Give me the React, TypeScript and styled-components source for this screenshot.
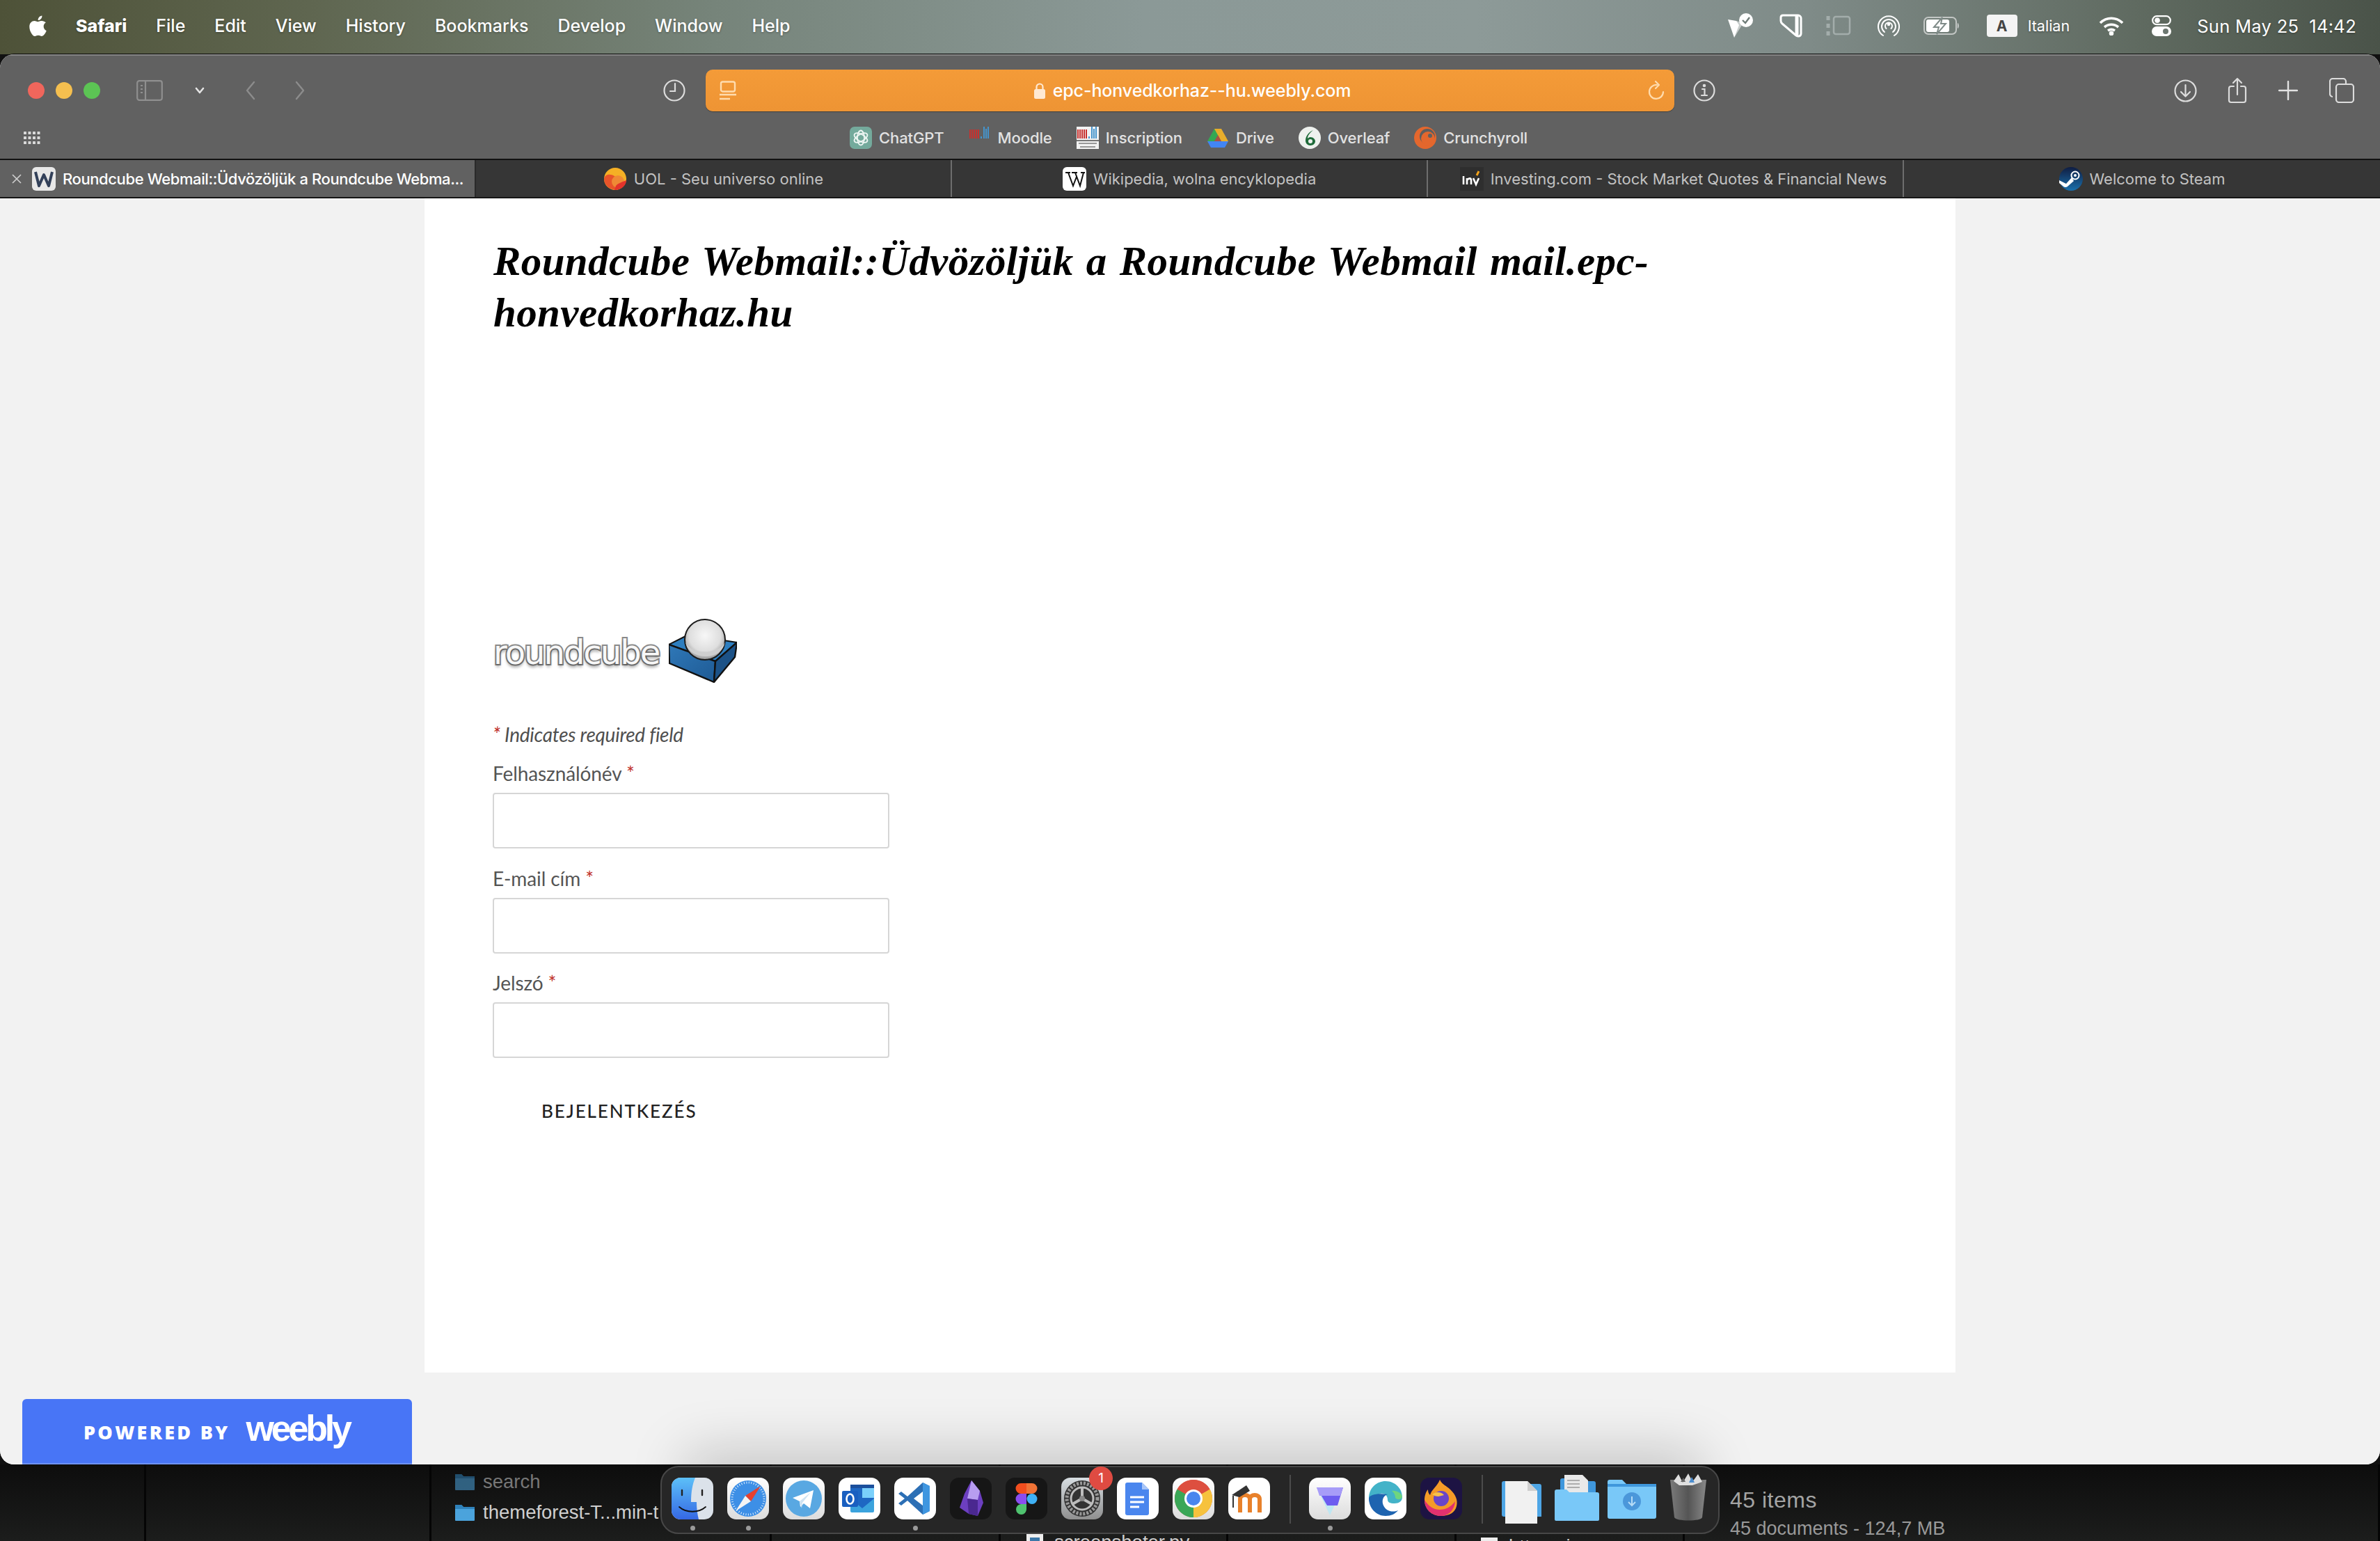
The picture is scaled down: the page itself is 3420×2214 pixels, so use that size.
import React from "react";
import styled, { createGlobalStyle } from "styled-components";

const Global = createGlobalStyle`
  html, body { margin: 0; padding: 0; width: 3420px; height: 2214px; overflow: hidden; background: #111; }
  #root { width: 3420px; height: 2214px; }
  * { box-sizing: border-box; }
`;

const ui = `Inter, "Liberation Sans", sans-serif`;

const Screen = styled.div`
  width: 3420px; height: 2214px; display: flex; flex-direction: column; font-family: ${ui};
`;

/* ---------- menu bar ---------- */
const MenuBar = styled.header`
  height: 78px; flex: none; display: flex; align-items: center; padding: 0 34px 4px 42px;
  background: linear-gradient(90deg, #4e5238 0%, #5f6650 13%, #76847a 30%, #8b9997 48%, #8d9a98 62%, #7f8b88 76%, #5f6a60 90%, #4a5349 100%);
  color: #fff; font-size: 25px; font-weight: 500; text-shadow: 0 1px 3px rgba(0,0,0,.35);
`;
const MenuLeft = styled.nav`display: flex; align-items: center; gap: 42px;`;
const MenuItem = styled.span<{ $bold?: boolean }>`
  font-weight: ${p => (p.$bold ? 800 : 500)}; letter-spacing: 0;
`;
const AppleSlot = styled.span`width: 25px; height: 30px; margin-right: 0; display: flex;`;
const MenuRight = styled.div`margin-left: auto; display: flex; align-items: center;`;
const StatusSlot = styled.span<{ $ml: number; $w: number }>`
  margin-left: ${p => p.$ml}px; width: ${p => p.$w}px; height: 34px; display: flex; align-items: center; justify-content: center;
`;
const InputBadge = styled.span`
  margin-left: 39px; width: 44px; height: 32px; background: #f4f4f4; color: #444; border-radius: 4px;
  font-size: 21px; font-weight: 700; display: flex; align-items: center; justify-content: center; text-shadow: none;
`;
const InputName = styled.span`margin-left: 15px; font-size: 21.5px; font-weight: 400;`;
const Clock = styled.time`margin-left: 37px; font-size: 25.5px; font-weight: 400; letter-spacing: .3px; white-space: pre;`;

/* ---------- window ---------- */
const Window = styled.main`
  height: 2026px; flex: none; display: flex; flex-direction: column; overflow: hidden;
  border-radius: 20px 20px 20px 20px; background: #f2f2f2;
  box-shadow: 0 0 0 1px #0b0b0b;
`;
const Toolbar = styled.div`
  height: 150px; flex: none; background: #616161; border-top: 2px solid #858585; padding-top: 20px;
`;
const ToolRow = styled.div`height: 60px; display: flex; align-items: center; padding-left: 40px;`;
const Lights = styled.div`display: flex; gap: 16px;`;
const Light = styled.span<{ $c: string }>`width: 24px; height: 24px; border-radius: 50%; background: ${p => p.$c};`;
const ToolIcon = styled.span<{ $ml: number; $w: number }>`
  margin-left: ${p => p.$ml}px; width: ${p => p.$w}px; height: 40px; flex: none; display: flex; align-items: center; justify-content: center;
`;
const UrlBar = styled.div`
  margin-left: 29px; width: 1392px; height: 60px; flex: none; border-radius: 10px; position: relative;
  background: linear-gradient(180deg, #f49b38, #ee9434); box-shadow: 0 1px 1px rgba(0,0,0,.35);
  display: flex; align-items: center; justify-content: space-between; padding: 0 14px 0 20px; color: #fff;
`;
const UrlCenter = styled.span`display: flex; align-items: center; gap: 10px; font-size: 25px; font-weight: 500; letter-spacing: -.1px; margin-left: 0;`;
const BookRow = styled.div`height: 40px; margin-top: 18px; display: flex; align-items: center; padding-left: 34px;`;
const BookList = styled.div`margin-left: 1163px; display: flex; align-items: center; gap: 35px;`;
const Book = styled.span`display: flex; align-items: center; gap: 10px; color: #e2e2e2; font-size: 22px; font-weight: 500; letter-spacing: -.1px;`;
const Fav = styled.span`width: 32px; height: 32px; flex: none; display: flex;`;

const Tabs = styled.div`
  height: 57px; flex: none; display: grid; grid-template-columns: repeat(5, 1fr);
  background: #363636; border-top: 2px solid #111; border-bottom: 2px solid #161616;
`;
const Tab = styled.div<{ $active?: boolean; $pl?: number }>`
  display: flex; align-items: center; gap: 10px; overflow: hidden; white-space: nowrap;
  justify-content: ${p => (p.$active ? "flex-start" : "center")};
  padding-left: ${p => (p.$active ? 16 : p.$pl ?? 0)}px;
  background: ${p => (p.$active ? "#616161" : "transparent")};
  color: ${p => (p.$active ? "#fff" : "#c2c2c2")};
  font-size: 22px; font-weight: ${p => (p.$active ? 500 : 400)};
  letter-spacing: ${p => (p.$active ? "-.4px" : "0")};
  border-right: 2px solid ${p => (p.$active ? "#2a2a2a" : "#6e6e6e")};
  &:last-child { border-right: 0; }
`;
const TabClose = styled.span`width: 16px; height: 16px; display: flex; margin-right: 4px;`;
const TabFav = styled.span`width: 34px; height: 34px; flex: none; display: flex;`;

/* ---------- page ---------- */
const Page = styled.div`
  flex: 1; position: relative; overflow: hidden; background: #f2f2f2; display: flex; justify-content: center; padding-right: 0;
  border-radius: 0 0 20px 20px;
`;
const Column = styled.section`
  width: 2200px; height: 1687px; background: #fff; padding: 53px 99px 0; margin-right: 0; flex: none;
`;
const Title = styled.h1`
  margin: 0; width: 1760px; font-family: "Liberation Serif", serif; font-style: italic; font-weight: 700;
  font-size: 59px; line-height: 74px; color: #000; letter-spacing: .4px; word-spacing: 3px;
  overflow-wrap: normal;
`;
const Logo = styled.div`margin-top: 403px; height: 92px; display: flex; align-items: flex-end; gap: 14px;`;
const LogoWord = styled.span`
  font-family: "DejaVu Sans", sans-serif; font-size: 48px; line-height: 62px; letter-spacing: -2px; margin-bottom: 13px; color: #f8f8f8;
  -webkit-text-stroke: 4px #8a8a8a; paint-order: stroke fill; text-shadow: 0 4px 4px rgba(0,0,0,.4); font-weight: 400;
`;
const Required = styled.p`
  margin: 56px 0 0 -1px; font: italic 400 28px/36px Lato, sans-serif; color: #4f4f4f; letter-spacing: -.25px;
`;
const Star = styled.span`color: #c0322b;`;
const Field = styled.div`margin-top: 20px; display: flex; flex-direction: column; gap: 10px; & + & { margin-top: 24.5px; }`;
const FieldLabel = styled.label`font: 400 28px/36px Lato, sans-serif; color: #555; letter-spacing: -.1px; margin-left: -1px;`;
const TextInput = styled.input`
  width: 570px; height: 80px; margin-left: -1px; border: 2px solid #d6d6d6; border-radius: 4px; background: #fff; outline: 0; display: block;
`;
const Submit = styled.button`
  display: block; margin: 58px 0 0 69px; padding: 0; border: 0; background: none; color: #222;
  font: 500 26px/36px Lato, sans-serif; letter-spacing: 1.9px;
`;
const Badge = styled.a`
  position: absolute; left: 32px; bottom: 0; width: 560px; height: 94px; background: #4875f6; border-radius: 6px 6px 0 0;
  border-bottom: 2px solid #6f93fb; color: #fff; display: flex; align-items: center; padding-left: 88px; gap: 23px;
`;
const BadgeSmall = styled.span`font: 800 27px/1 "Open Sans", sans-serif; letter-spacing: 3.3px; white-space: nowrap; margin-top: 2px;`;
const BadgeBrand = styled.span`font: 700 52px/1 "Liberation Sans", sans-serif; letter-spacing: -4.2px; margin-top: -8px;`;
const DockShadow = styled.div`
  position: absolute; left: 1000px; bottom: -40px; width: 1430px; height: 40px; box-shadow: 0 0 80px 14px rgba(0,0,0,.22);
`;

/* ---------- desktop behind ---------- */
const Desktop = styled.footer`
  flex: 1; position: relative; overflow: hidden; display: grid;
  grid-template-columns: 210px 410px 489px 329px 327px 328px 328px 1fr;
  background: linear-gradient(180deg, #0d0d0d 0%, #1c1d1c 100%);
  color: #ccc; font-family: "Liberation Sans", sans-serif;
`;
const FinderCol = styled.div<{ $pl?: number; $pt?: number }>`
  border-right: 3px solid #050505; padding-left: ${p => p.$pl ?? 0}px; padding-top: ${p => p.$pt ?? 0}px;
  display: flex; flex-direction: column; &:last-child { border-right: 0; }
`;
const FinderRow = styled.div<{ $dim?: boolean }>`
  height: 44px; display: flex; align-items: center; gap: 12px; font-size: 27.5px; white-space: nowrap;
  color: ${p => (p.$dim ? "#777" : "#cfcfcf")};
`;
const FinderIcon = styled.span<{ $dim?: boolean }>`width: 28px; height: 26px; flex: none; display: flex; opacity: ${p => (p.$dim ? 0.55 : 1)};`;
const StatusBig = styled.div`font-size: 32px; line-height: 36px; color: #a4a4a4; margin-top: 33px; white-space: nowrap; letter-spacing: .5px;`;
const StatusSmall = styled.div`font-size: 27px; line-height: 30px; color: #999; margin-top: 8px; white-space: nowrap;`;

const Dock = styled.div`
  position: absolute; left: 949px; top: 2px; width: 1522px; height: 98px; border-radius: 26px;
  background: #262626; border: 2px solid #474747; padding: 15px 0 0 14px; display: flex; align-items: flex-start;
`;
const Tile = styled.div<{ $ml?: number; $w?: number }>`
  position: relative; flex: none; width: ${p => p.$w ?? 60}px; height: 60px; margin-left: ${p => p.$ml ?? 20}px;
  & > svg { display: block; overflow: visible; }
  &:first-child { margin-left: 0; }
`;
const Running = styled.i`
  position: absolute; left: 50%; top: 69px; width: 7px; height: 7px; margin-left: -3.5px; border-radius: 50%; background: #9a9a9a;
`;
const Notif = styled.b`
  position: absolute; right: -14px; top: -16px; width: 34px; height: 34px; border-radius: 50%; background: #df4b42; color: #fff;
  font: 400 19px/34px Inter, sans-serif; text-align: center;
`;
const DockSep = styled.span`flex: none; width: 2px; height: 70px; margin: -4px 0 0 28px; background: #4b4b4b;`;

/* ---------- icons ---------- */
const Apple = () => (
  <svg width="25" height="30" viewBox="0 0 814 1000" fill="#fff">
    <path d="M788 341c-6 4-108 62-108 190 0 148 130 200 134 202-1 3-21 72-69 142-43 62-88 123-156 123s-86-40-165-40c-77 0-104 41-166 41s-106-57-156-128C44 788 0 667 0 552c0-184 120-282 238-282 63 0 115 41 155 41 38 0 97-44 168-44 27 0 125 3 227 74zM554 169c29-35 50-83 50-131 0-7-1-14-2-19-48 2-105 32-139 72-27 31-52 79-52 128 0 7 1 15 2 17 3 1 8 1 13 1 43 0 97-29 128-68z" />
  </svg>
);
const Shield = () => (
  <svg width="38" height="36" viewBox="0 0 38 36" fill="#fff">
    <path d="M1 9l12 2 4 6-7 18z" /><path d="M13 11l10 3-13 21z" opacity=".55" />
    <circle cx="27" cy="10" r="10" /><path d="M22 10l4 4 6-8" stroke="#6f7c78" strokeWidth="2.4" fill="none" />
  </svg>
);
const Tag = () => (
  <svg width="34" height="34" viewBox="0 0 34 34" fill="none" stroke="#fff" strokeWidth="3" strokeLinecap="round" strokeLinejoin="round">
    <path d="M3 5c0-2 1-3 3-3h22c2 0 4 2 4 4v22c0 4-4 5-7 3L5 14c-1-1-2-2-2-4z" />
    <path d="M26 4v25" strokeWidth="5" />
  </svg>
);
const DimFrame = () => (
  <svg width="36" height="32" viewBox="0 0 36 32" fill="none" stroke="#a3adab" strokeWidth="2.5">
    <rect x="11" y="3" width="23" height="25" rx="3" /><path d="M3 2v6M3 13v6M3 24v6" strokeWidth="5" />
  </svg>
);
const Airdrop = () => (
  <svg width="32" height="32" viewBox="0 0 32 32" fill="none" stroke="#fff" strokeWidth="2" strokeLinecap="round">
    <path d="M8 30A15 15 0 1 1 24 30" /><path d="M10 25A10 10 0 1 1 22 25" /><path d="M12.5 20a5 5 0 1 1 7 0" /><circle cx="16" cy="14" r="1.2" fill="#fff" />
  </svg>
);
const Battery = () => (
  <svg width="52" height="26" viewBox="0 0 52 26">
    <rect x="1" y="1" width="46" height="24" rx="6" fill="none" stroke="#e6e6e6" strokeWidth="2" opacity=".7" />
    <rect x="4" y="4" width="33" height="18" rx="3" fill="#fff" />
    <path d="M49 9c2 1 2 7 0 8z" fill="#e6e6e6" />
    <path d="M27 1L15 15h7l-3 10 13-15h-7z" fill="#fff" stroke="#7f8b88" strokeWidth="2" />
  </svg>
);
const Wifi = () => (
  <svg width="36" height="28" viewBox="0 0 36 28" fill="none" stroke="#fff" strokeWidth="3.6" strokeLinecap="butt">
    <path d="M2 10c9-9 23-9 32 0" /><path d="M8 16c6-5 14-5 20 0" /><path d="M13 21c3-2 7-2 10 0" /><circle cx="18" cy="25" r="1.5" fill="#fff" />
  </svg>
);
const Control = () => (
  <svg width="28" height="30" viewBox="0 0 28 30">
    <rect x="1.2" y="1.2" width="25.6" height="12" rx="6" fill="none" stroke="#fff" strokeWidth="2.2" />
    <circle cx="8" cy="7.2" r="3.8" fill="#fff" />
    <rect y="16" width="28" height="14" rx="7" fill="#fff" /><circle cx="20" cy="23" r="4" fill="#6c7770" />
  </svg>
);

const Sidebar = () => (
  <svg width="38" height="30" viewBox="0 0 38 30" fill="none" stroke="#8f8f8f" strokeWidth="2.2">
    <rect x="1.2" y="1.2" width="35.6" height="27.6" rx="3" /><path d="M13 1v28" />
    <path d="M6 8h3M6 13h3M6 18h3" strokeWidth="2" />
  </svg>
);
const Chevron = () => (
  <svg width="14" height="10" viewBox="0 0 14 10" fill="none" stroke="#e3e3e3" strokeWidth="2.6" strokeLinecap="round" strokeLinejoin="round"><path d="M2 2l5 6 5-6" /></svg>
);
const Back = ({ flip }: { flip?: boolean }) => (
  <svg width="14" height="28" viewBox="0 0 14 28" fill="none" stroke="#8c8c8c" strokeWidth="2.4" strokeLinecap="round" strokeLinejoin="round">
    <path d={flip ? "M2 2l10 12L2 26" : "M12 2L2 14l10 12"} />
  </svg>
);
const History = () => (
  <svg width="32" height="32" viewBox="0 0 32 32" fill="none" stroke="#dcdcdc" strokeWidth="2.2" strokeLinecap="round">
    <circle cx="16" cy="16" r="14.5" /><path d="M17 6v11h-7" />
  </svg>
);
const Reader = () => (
  <svg width="24" height="28" viewBox="0 0 24 28" fill="none" stroke="#ffdcae" strokeWidth="2.4">
    <rect x="2" y="1.5" width="20" height="14" rx="2.5" /><path d="M0 20h24M0 26h15" />
  </svg>
);
const Lock = () => (
  <svg width="18" height="24" viewBox="0 0 18 24">
    <path d="M4.5 11V7a4.5 4.5 0 0 1 9 0v4" fill="none" stroke="#ffe9d2" strokeWidth="2.2" /><rect x="1" y="10" width="16" height="14" rx="2.5" fill="#ffe9d2" />
  </svg>
);
const Reload = () => (
  <svg width="24" height="30" viewBox="0 0 24 30" fill="none" stroke="#ffdcae" strokeWidth="2.2" strokeLinecap="round" strokeLinejoin="round">
    <path d="M13 7a10 10 0 1 0 9 10" /><path d="M11 2l5 5-5 5" />
  </svg>
);
const Info = () => (
  <svg width="32" height="32" viewBox="0 0 32 32" fill="none" stroke="#dcdcdc" strokeWidth="2.2" strokeLinecap="round">
    <circle cx="16" cy="16" r="14.5" /><path d="M13 14h3.5v9M12 23h8" /><circle cx="16" cy="9" r="1.2" fill="#dcdcdc" />
  </svg>
);
const Download = () => (
  <svg width="33" height="33" viewBox="0 0 33 33" fill="none" stroke="#dcdcdc" strokeWidth="2.2" strokeLinecap="round" strokeLinejoin="round">
    <circle cx="16.5" cy="16.5" r="15" /><path d="M16.5 8v16M10 18l6.5 6.5L23 18" />
  </svg>
);
const Share = () => (
  <svg width="28" height="38" viewBox="0 0 28 38" fill="none" stroke="#dcdcdc" strokeWidth="2.2" strokeLinecap="round" strokeLinejoin="round">
    <path d="M9 13H5a3 3 0 0 0-3 3v17a3 3 0 0 0 3 3h18a3 3 0 0 0 3-3V16a3 3 0 0 0-3-3h-4" /><path d="M14 25V2M8 8l6-6 6 6" />
  </svg>
);
const Plus = () => (
  <svg width="28" height="28" viewBox="0 0 28 28" stroke="#e2e2e2" strokeWidth="2.4" strokeLinecap="round"><path d="M14 1v26M1 14h26" /></svg>
);
const TabsIcon = () => (
  <svg width="36" height="36" viewBox="0 0 36 36" fill="none" stroke="#dcdcdc" strokeWidth="2.2">
    <rect x="10" y="9" width="25" height="26" rx="4" /><path d="M5 27a4 4 0 0 1-4-4V5a4 4 0 0 1 4-4h15a4 4 0 0 1 4 4v4" />
  </svg>
);
const Grid = () => (
  <svg width="24" height="18" viewBox="0 0 24 18" fill="#d9d9d9">
    {[0, 7, 14].flatMap(y => [0, 6.5, 13, 19.5].map(x => <rect key={`${x}-${y}`} x={x} y={y} width="4" height="4" rx=".6" />))}
  </svg>
);
const Close = () => (
  <svg width="16" height="16" viewBox="0 0 16 16" stroke="#cfcfcf" strokeWidth="1.6"><path d="M2 2l12 12M14 2L2 14" /></svg>
);

const ChatGPT = () => (
  <svg width="32" height="32" viewBox="0 0 32 32">
    <rect width="32" height="32" rx="7" fill="#74aa9c" />
    <g fill="none" stroke="#eef6f3" strokeWidth="1.8">
      <ellipse cx="16" cy="16" rx="5" ry="10.5" /><ellipse cx="16" cy="16" rx="5" ry="10.5" transform="rotate(60 16 16)" /><ellipse cx="16" cy="16" rx="5" ry="10.5" transform="rotate(120 16 16)" />
    </g>
  </svg>
);
const UniBars = () => (
  <g>
    {[1, 4, 7, 10, 13].map(x => <rect key={x} x={x} y="4" width="2" height="13" fill="#c7312e" />)}
    <rect x="17" y="14" width="2" height="3" fill="#4594cc" />
    {[21, 24, 27].map((x, i) => <rect key={x} x={x} y={i === 1 ? 3 : 0} width="2" height={i === 1 ? 14 : 17} fill="#4594cc" />)}
  </g>
);
const Moodle = () => (
  <svg width="32" height="32" viewBox="0 0 32 32"><UniBars /></svg>
);
const Inscription = () => (
  <svg width="32" height="32" viewBox="0 0 32 32">
    <rect width="32" height="32" fill="#f2f2f2" /><UniBars />
    <rect x="0" y="19" width="32" height="2" fill="#777" /><rect x="3" y="23" width="26" height="2" fill="#999" /><rect x="5" y="28" width="22" height="2" fill="#999" />
  </svg>
);
const Drive = () => (
  <svg width="32" height="32" viewBox="0 0 32 32">
    <path d="M11 3h10l-5 10-5 8H1z" fill="#34a853" /><path d="M11 3h10l10 18H21z" fill="#e8ad2b" /><path d="M1 21h30l-5 9H6z" fill="#4285f4" /><path d="M11 21h10l-5-9z" fill="#c84a3b" opacity=".7" />
  </svg>
);
const Overleaf = () => (
  <svg width="32" height="32" viewBox="0 0 32 32">
    <circle cx="16" cy="16" r="16" fill="#eef1ee" />
    <path d="M21 5c-7 3-11 9-11 15 0 4 3 7 7 7s7-3 7-6-3-6-7-6c-2 0-3 1-4 2 0-4 3-8 8-12z" fill="#1f6b3a" />
    <circle cx="17" cy="21" r="3" fill="#eef1ee" />
  </svg>
);
const Crunchy = () => (
  <svg width="32" height="32" viewBox="0 0 32 32">
    <circle cx="16" cy="16" r="16" fill="#e4672d" />
    <circle cx="19" cy="14" r="11" fill="#5e5e5e" /><circle cx="20" cy="17" r="10" fill="#e4672d" /><circle cx="23" cy="13" r="3" fill="#616161" />
  </svg>
);
const WeeblyFav = () => (
  <svg width="34" height="34" viewBox="0 0 34 34">
    <rect width="34" height="34" rx="6" fill="#e8e8e8" />
    <path d="M5 7l5 20 7-16 7 16 5-20" fill="none" stroke="#33415a" strokeWidth="4" strokeLinejoin="round" />
  </svg>
);
const Uol = () => (
  <svg width="34" height="34" viewBox="0 0 34 34">
    <circle cx="17" cy="17" r="16" fill="#f5b025" /><path d="M1 17a16 16 0 0 0 26 12L16 13C10 9 2 10 1 17z" fill="#e8542a" /><circle cx="21" cy="21" r="9" fill="#ef8a35" />
    <path d="M16 33c10 0 17-7 17-14-4 2-12 4-15 8z" fill="#e3332b" />
  </svg>
);
const Wiki = () => (
  <svg width="34" height="34" viewBox="0 0 34 34">
    <rect width="34" height="34" rx="6" fill="#fff" />
    <path d="M4 8h7M8 8l7 19 5-13M13 8h8M18 8l7 19 5-19M26 8h6" fill="none" stroke="#111" strokeWidth="2" />
  </svg>
);
const Inv = () => (
  <svg width="34" height="34" viewBox="0 0 34 34">
    <rect width="34" height="34" fill="#2e2e2e" />
    <path d="M5 13v12M10 25V16M10 19c3-4 6-3 6 0v6M19 16l4 9 4-9" fill="none" stroke="#fff" strokeWidth="2.6" />
    <path d="M27 6l-3 6" stroke="#f2a31b" strokeWidth="3" />
  </svg>
);
const Steam = () => (
  <svg width="34" height="34" viewBox="0 0 34 34">
    <defs><linearGradient id="st" x1="0" y1="0" x2="0" y2="1"><stop offset="0" stopColor="#101d42" /><stop offset="1" stopColor="#1a70ac" /></linearGradient></defs>
    <circle cx="17" cy="17" r="17" fill="url(#st)" />
    <circle cx="23" cy="12" r="5.5" fill="none" stroke="#fff" strokeWidth="2" /><circle cx="23" cy="12" r="2" fill="#fff" />
    <path d="M0 19l10 5 8-9 3 5-8 7a5 5 0 0 1-8 0L0 23z" fill="#fff" />
  </svg>
);

const RoundcubeBox = () => (
  <svg width="98" height="92" viewBox="0 0 98 92">
    <defs>
      <radialGradient id="ball" cx=".5" cy=".4" r=".65"><stop offset="0" stopColor="#f7f7f7" /><stop offset=".6" stopColor="#dedede" /><stop offset=".85" stopColor="#a9a9a9" /><stop offset="1" stopColor="#666" /></radialGradient>
      <linearGradient id="lf" x1="0" y1="0" x2="1" y2="1"><stop offset="0" stopColor="#2f78b8" /><stop offset="1" stopColor="#1e5a94" /></linearGradient>
    </defs>
    <path d="M0 37l28-14 70 11-31 27z" fill="#2d7ebf" stroke="#111" strokeWidth="2" strokeLinejoin="round" />
    <path d="M0 37l67 24-2 30L1 64z" fill="url(#lf)" stroke="#111" strokeWidth="2.4" strokeLinejoin="round" />
    <path d="M67 61l31-27-3 21-30 36z" fill="#1c5287" stroke="#111" strokeWidth="2.4" strokeLinejoin="round" />
    <circle cx="52" cy="30" r="29" fill="url(#ball)" stroke="#1b1b1b" strokeWidth="2" />
    <path d="M24 34c8 18 48 18 57 0-4 14-14 20-28 20s-25-6-29-20z" fill="#cfcfcf" />
  </svg>
);

const Finder = () => (
  <svg width="60" height="60" viewBox="0 0 60 60">
    <defs><linearGradient id="fi" x1="0" y1="0" x2="0" y2="1"><stop offset="0" stopColor="#5cc0f8" /><stop offset="1" stopColor="#3568e4" /></linearGradient></defs>
    <rect width="60" height="60" rx="13" fill="#dbe2ea" />
    <path d="M13 0h21c-4 10-6 20-6 35h8c0 9 1 17 3 25H13A13 13 0 0 1 0 47V13A13 13 0 0 1 13 0z" fill="url(#fi)" />
    <path d="M15 18v7M44 18v7" stroke="#222" strokeWidth="2.4" strokeLinecap="round" />
    <path d="M11 42c10 9 28 9 38 0" stroke="#111" strokeWidth="1.8" fill="none" strokeLinecap="round" />
  </svg>
);
const Safari = () => (
  <svg width="60" height="60" viewBox="0 0 60 60">
    <defs><linearGradient id="wt" x1="0" y1="0" x2="0" y2="1"><stop offset="0" stopColor="#fff" /><stop offset="1" stopColor="#dcdcdc" /></linearGradient></defs>
    <rect width="60" height="60" rx="13" fill="url(#wt)" />
    <circle cx="30" cy="30" r="26" fill="#3d8fe6" />
    <circle cx="30" cy="30" r="23" fill="none" stroke="#dfeefc" strokeWidth="3" strokeDasharray="1 2.5" />
    <path d="M48 12L26 26l8 8z" fill="#e5402f" /><path d="M12 48l22-14-8-8z" fill="#f4f4f4" />
  </svg>
);
const Telegram = () => (
  <svg width="60" height="60" viewBox="0 0 60 60">
    <rect width="60" height="60" rx="13" fill="url(#wt)" /><circle cx="30" cy="30" r="26" fill="#59a8e2" />
    <path d="M14 29l30-11-5 26-9-7-5 5-1-8z" fill="#fff" /><path d="M24 34l16-13-12 15-1 8z" fill="#cfe3f2" />
  </svg>
);
const Outlook = () => (
  <svg width="60" height="60" viewBox="0 0 60 60">
    <rect width="60" height="60" rx="13" fill="#fff" />
    <rect x="17" y="10" width="34" height="34" rx="2" fill="#1e67c3" /><rect x="34" y="15" width="17" height="14" fill="#7ad0fb" /><rect x="17" y="10" width="34" height="5" fill="#1b4f9c" />
    <path d="M17 30l17 14 17-14v18a2 2 0 0 1-2 2H19a2 2 0 0 1-2-2z" fill="#3ba3dd" />
    <rect x="5" y="19" width="23" height="23" rx="2" fill="#1a5fc0" /><ellipse cx="16.5" cy="30.5" rx="5" ry="7" fill="none" stroke="#fff" strokeWidth="2.6" />
  </svg>
);
const VSCode = () => (
  <svg width="60" height="60" viewBox="0 0 60 60">
    <rect width="60" height="60" rx="13" fill="#fff" />
    <path d="M41 7l10 5v36l-10 5L19 33l-9 7-4-3 9-7-9-7 4-3 9 7z" fill="#2c6fb5" /><path d="M41 7l10 5v36l-10 5z" fill="#3f96e0" /><path d="M41 20L28 30l13 10z" fill="#fff" />
  </svg>
);
const Obsidian = () => (
  <svg width="60" height="60" viewBox="0 0 60 60">
    <rect width="60" height="60" rx="13" fill="#161616" />
    <path d="M31 4l12 15 5 17-8 19-13-3-13-9 7-20z" fill="#6c3fc0" /><path d="M31 4l12 15-3 13-15-2z" fill="#b79df0" /><path d="M25 30l15 2 0 23-13-3z" fill="#4a2890" />
  </svg>
);
const Figma = () => (
  <svg width="60" height="60" viewBox="0 0 60 60">
    <rect width="60" height="60" rx="13" fill="#161616" />
    <path d="M30 8H22a7.500 7.500 0 0 0 0 15h8z" fill="#f24e1e" /><path d="M30 8h8a7.500 7.500 0 0 1 0 15h-8z" fill="#f07336" />
    <path d="M30 23H22a7.500 7.500 0 0 0 0 15h8z" fill="#8a4df0" /><circle cx="38" cy="30.500" r="7.500" fill="#3fb1f5" />
    <path d="M22 38h8v7.500a7.500 7.500 0 1 1-8-7.500z" fill="#4fc26f" />
  </svg>
);
const Settings = () => (
  <svg width="60" height="60" viewBox="0 0 60 60">
    <defs><linearGradient id="gs" x1="0" y1="0" x2="0" y2="1"><stop offset="0" stopColor="#d7dee2" /><stop offset="1" stopColor="#8f8f8f" /></linearGradient></defs>
    <rect width="60" height="60" rx="13" fill="url(#gs)" /><circle cx="30" cy="30" r="26" fill="#333" />
    <circle cx="30" cy="30" r="22" fill="none" stroke="#999" strokeWidth="5" strokeDasharray="3 2" /><circle cx="30" cy="30" r="16" fill="none" stroke="#bdbdbd" strokeWidth="3" />
    <path d="M30 30V14M30 30L16 38M30 30l14 8" stroke="#bdbdbd" strokeWidth="4" /><circle cx="30" cy="30" r="4" fill="#888" />
  </svg>
);
const Docs = () => (
  <svg width="60" height="60" viewBox="0 0 60 60">
    <rect width="60" height="60" rx="13" fill="#fff" />
    <path d="M15 7h21l10 10v34a3 3 0 0 1-3 3H15a3 3 0 0 1-3-3V10a3 3 0 0 1 3-3z" fill="#4a86ee" /><path d="M36 7l10 10H36z" fill="#a7c5f8" />
    <path d="M19 28h20M19 35h20M19 42h13" stroke="#fff" strokeWidth="3" />
  </svg>
);
const Chrome = () => (
  <svg width="60" height="60" viewBox="0 0 60 60">
    <rect width="60" height="60" rx="13" fill="url(#wt)" />
    <circle cx="30" cy="30" r="27" fill="#dd4f3f" /><path d="M30 30L6.600 16.500A27 27 0 0 0 30 57z" fill="#3aa757" /><path d="M30 30l23.400-13.500A27 27 0 0 1 30 57z" fill="#f6c23d" />
    <path d="M30 30L6.600 16.500A27 27 0 0 1 53.400 16.500z" fill="#dd4f3f" />
    <circle cx="30" cy="30" r="13" fill="#fff" /><circle cx="30" cy="30" r="10" fill="#4a86ee" />
  </svg>
);
const MoodleDock = () => (
  <svg width="60" height="60" viewBox="0 0 60 60">
    <rect width="60" height="60" rx="13" fill="#fff" />
    <path d="M17 50V31c0-8 14-8 14 0v19M31 31c0-8 14-8 14 0v19" fill="none" stroke="#e8812b" strokeWidth="6" />
    <path d="M5 25l21-14 5 8-15 9z" fill="#333" /><path d="M7 26v17" stroke="#333" strokeWidth="2" />
  </svg>
);
const Prism = () => (
  <svg width="60" height="60" viewBox="0 0 60 60">
    <rect width="60" height="60" rx="13" fill="url(#wt)" />
    <path d="M11 14h38L30 54z" fill="#bfe7f2" /><path d="M11 14h38l-8 26-15 0z" fill="#6d5cf0" /><path d="M11 14h38l-4 12-30 0z" fill="#a79cf8" />
  </svg>
);
const Edge = () => (
  <svg width="60" height="60" viewBox="0 0 60 60">
    <rect width="60" height="60" rx="13" fill="#fff" />
    <path d="M6 30C6 14 18 5 30 5c14 0 24 11 24 23 0 6-5 9-11 9-7 0-10-2-10-5 0-8-7-11-13-8-6 3-8 9-7 16C9 38 6 35 6 30z" fill="#43b3c8" />
    <path d="M54 28c0-5-8-10-15-9 4 3 5 7 5 10 4 4 8 2 10-1z" fill="#6fd57f" />
    <path d="M6 30c0 14 11 25 24 25 8 0 14-3 18-8-9 4-18 0-21-7-3-6-1-14 6-16-13-2-27 0-27 6z" fill="#1e64b0" />
  </svg>
);
const Firefox = () => (
  <svg width="60" height="60" viewBox="0 0 60 60">
    <rect width="60" height="60" rx="13" fill="#1d1343" />
    <path d="M30 55C16 55 6 45 6 32c0-6 2-12 5-15 0 4 1 6 3 8 2-8 10-12 14-22 4 8 9 8 15 14 8 8 11 15 9 24-2 9-11 14-22 14z" fill="#f59a27" />
    <path d="M30 55C16 55 6 45 6 32c5 8 12 14 22 14 9 0 16-4 22-12-1 13-10 21-20 21z" fill="#e2316f" />
    <circle cx="30" cy="30" r="11" fill="#6a45c8" /><path d="M17 24c5-4 13-4 17 1l-8 2c-4 0-6-1-9-3z" fill="#f7c14a" />
  </svg>
);
const DocFolder = () => (
  <svg width="58" height="66" viewBox="0 0 58 66">
    <path d="M0 8a3 3 0 0 1 3-3h14l4 4h33a3 3 0 0 1 3 3v44H3a3 3 0 0 1-3-3z" fill="#4ea6e6" />
    <path d="M5 5h32l14 14v47H5z" fill="#f1f1f1" /><path d="M37 5l14 14H37z" fill="#cfcfcf" />
  </svg>
);
const DocsFolder = () => (
  <svg width="64" height="66" viewBox="0 0 64 66" style={{ marginTop: -4 }}>
    <path d="M8 8a3 3 0 0 1 3-3h12l4 4h29a3 3 0 0 1 3 3v20H8z" fill="#3f97dc" />
    <path d="M14 0h26l8 8v24H14z" fill="#e9e9e9" /><path d="M18 8h18M18 13h18M18 18h18" stroke="#999" strokeWidth="1.6" />
    <path d="M0 24a3 3 0 0 1 3-3h14l4 4h40a3 3 0 0 1 3 3v36a2 2 0 0 1-2 2H2a2 2 0 0 1-2-2z" fill="#79c8f8" />
  </svg>
);
const DownFolder = () => (
  <svg width="70" height="60" viewBox="0 0 70 60">
    <path d="M0 6a3 3 0 0 1 3-3h18l6 6h40a3 3 0 0 1 3 3v44a3 3 0 0 1-3 3H3a3 3 0 0 1-3-3z" fill="#79c8f8" /><path d="M0 9h70v4H0z" fill="#3f97dc" />
    <ellipse cx="35" cy="34" rx="13" ry="13" fill="#4b97da" /><path d="M35 27v13M30 35l5 5 5-5" stroke="#b6dcf7" strokeWidth="2" fill="none" />
  </svg>
);
const Trash = () => (
  <svg width="54" height="70" viewBox="0 0 54 70" style={{ marginTop: -7 }}>
    <defs><linearGradient id="tr" x1="0" y1="0" x2="1" y2="0"><stop offset="0" stopColor="#7a7a7a" /><stop offset=".5" stopColor="#555" /><stop offset="1" stopColor="#888" /></linearGradient></defs>
    <path d="M1 10h52l-6 54c-1 6-38 6-40 0z" fill="url(#tr)" />
    <path d="M6 12l7-10 6 12 8-13 6 12 8-11 6 11-14 5H14z" fill="#dfdfdf" /><path d="M28 14l4-8 4 8z" fill="#4c8ed0" /><path d="M16 13l4-6 3 6z" fill="#666" />
  </svg>
);
const Folder = () => (
  <svg width="28" height="26" viewBox="0 0 28 26">
    <path d="M0 3a1 1 0 0 1 1-1h8l3 3h15a1 1 0 0 1 1 1v18a1 1 0 0 1-1 1H1a1 1 0 0 1-1-1z" fill="#4ba3dc" /><path d="M0 2h9l3 3h16v3H0z" fill="#2f82bb" />
  </svg>
);
const PyFile = () => (
  <svg width="24" height="26" viewBox="0 0 24 26"><rect width="24" height="26" fill="#eee" /><path d="M5 6h14v7H5z" fill="#3b77a8" /><path d="M5 13h14v7H5z" fill="#f1c93c" /></svg>
);

const bookmarks: [string, React.FC][] = [
  ["ChatGPT", ChatGPT], ["Moodle", Moodle], ["Inscription", Inscription], ["Drive", Drive], ["Overleaf", Overleaf], ["Crunchyroll", Crunchy],
];
const tabs: [string, React.FC, number][] = [
  ["UOL - Seu universo online", Uol, 0],
  ["Wikipedia, wolna encyklopedia", Wiki, 0],
  ["Investing.com - Stock Market Quotes & Financial News", Inv, 23],
  ["Welcome to Steam", Steam, 0],
];
const menu = ["File", "Edit", "View", "History", "Bookmarks", "Develop", "Window", "Help"];
const fields = ["Felhasználónév", "E-mail cím", "Jelszó"];

export default function App() {
  return (
    <Screen>
      <Global />
      <MenuBar>
        <MenuLeft>
          <AppleSlot><Apple /></AppleSlot>
          <MenuItem $bold>Safari</MenuItem>
          {menu.map(m => <MenuItem key={m}>{m}</MenuItem>)}
        </MenuLeft>
        <MenuRight>
          <StatusSlot $ml={0} $w={38}><Shield /></StatusSlot>
          <StatusSlot $ml={36} $w={34}><Tag /></StatusSlot>
          <StatusSlot $ml={34} $w={36}><DimFrame /></StatusSlot>
          <StatusSlot $ml={38} $w={32}><Airdrop /></StatusSlot>
          <StatusSlot $ml={34} $w={52}><Battery /></StatusSlot>
          <InputBadge>A</InputBadge>
          <InputName>Italian</InputName>
          <StatusSlot $ml={42} $w={36}><Wifi /></StatusSlot>
          <StatusSlot $ml={40} $w={28}><Control /></StatusSlot>
          <Clock>Sun May 25  14:42</Clock>
        </MenuRight>
      </MenuBar>

      <Window>
        <Toolbar>
          <ToolRow>
            <Lights>
              <Light $c="#f0665c" /><Light $c="#f5bf4f" /><Light $c="#5cc454" />
            </Lights>
            <ToolIcon $ml={52} $w={38}><Sidebar /></ToolIcon>
            <ToolIcon $ml={46} $w={14}><Chevron /></ToolIcon>
            <ToolIcon $ml={59} $w={14}><Back /></ToolIcon>
            <ToolIcon $ml={57} $w={14}><Back flip /></ToolIcon>
            <ToolIcon $ml={515} $w={32}><History /></ToolIcon>
            <UrlBar>
              <Reader />
              <UrlCenter><Lock />epc-honvedkorhaz--hu.weebly.com</UrlCenter>
              <Reload />
            </UrlBar>
            <ToolIcon $ml={27} $w={32}><Info /></ToolIcon>
            <ToolIcon $ml={659} $w={33}><Download /></ToolIcon>
            <ToolIcon $ml={44} $w={28}><Share /></ToolIcon>
            <ToolIcon $ml={45} $w={28}><Plus /></ToolIcon>
            <ToolIcon $ml={45} $w={36}><TabsIcon /></ToolIcon>
          </ToolRow>
          <BookRow>
            <Grid />
            <BookList>
              {bookmarks.map(([name, Icon]) => (
                <Book key={name}><Fav><Icon /></Fav>{name}</Book>
              ))}
            </BookList>
          </BookRow>
        </Toolbar>
        <Tabs>
          <Tab $active>
            <TabClose><Close /></TabClose>
            <TabFav><WeeblyFav /></TabFav>
            Roundcube Webmail::Üdvözöljük a Roundcube Webma...
          </Tab>
          {tabs.map(([name, Icon, pl]) => (
            <Tab key={name} $pl={pl}><TabFav><Icon /></TabFav>{name}</Tab>
          ))}
        </Tabs>
        <Page>
          <Column>
            <Title>Roundcube Webmail::Üdvözöljük a Roundcube Webmail mail.epc-honvedkorhaz.hu</Title>
            <Logo>
              <LogoWord>roundcube</LogoWord>
              <RoundcubeBox />
            </Logo>
            <Required><Star>*</Star> Indicates required field</Required>
            {fields.map(f => (
              <Field key={f}>
                <FieldLabel>{f} <Star>*</Star></FieldLabel>
                <TextInput aria-label={f} />
              </Field>
            ))}
            <Submit>BEJELENTKEZÉS</Submit>
          </Column>
          <DockShadow />
          <Badge>
            <BadgeSmall>POWERED BY</BadgeSmall>
            <BadgeBrand>weebly</BadgeBrand>
          </Badge>
        </Page>
      </Window>

      <Desktop>
        <FinderCol />
        <FinderCol />
        <FinderCol $pl={34} $pt={3}>
          <FinderRow $dim><FinderIcon $dim><Folder /></FinderIcon>search</FinderRow>
          <FinderRow><FinderIcon><Folder /></FinderIcon>themeforest-T...min-t</FinderRow>
        </FinderCol>
        <FinderCol />
        <FinderCol $pl={37} $pt={90}>
          <FinderRow><FinderIcon><PyFile /></FinderIcon>screenshoter.py</FinderRow>
        </FinderCol>
        <FinderCol />
        <FinderCol $pl={35} $pt={96}>
          <FinderRow><FinderIcon><PyFile /></FinderIcon>https...i...ss.png</FinderRow>
        </FinderCol>
        <FinderCol $pl={65}>
          <StatusBig>45 items</StatusBig>
          <StatusSmall>45 documents - 124,7 MB</StatusSmall>
        </FinderCol>
        <Dock>
          <Tile><Finder /><Running /></Tile>
          <Tile><Safari /><Running /></Tile>
          <Tile><Telegram /></Tile>
          <Tile><Outlook /></Tile>
          <Tile><VSCode /><Running /></Tile>
          <Tile><Obsidian /></Tile>
          <Tile><Figma /></Tile>
          <Tile><Settings /><Notif>1</Notif></Tile>
          <Tile><Docs /></Tile>
          <Tile><Chrome /></Tile>
          <Tile><MoodleDock /></Tile>
          <DockSep />
          <Tile $ml={26}><Prism /><Running /></Tile>
          <Tile><Edge /></Tile>
          <Tile><Firefox /></Tile>
          <DockSep />
          <Tile $ml={27} $w={58}><DocFolder /></Tile>
          <Tile $ml={18} $w={64}><DocsFolder /></Tile>
          <Tile $ml={12} $w={70}><DownFolder /></Tile>
          <Tile $ml={19} $w={54}><Trash /></Tile>
        </Dock>
      </Desktop>
    </Screen>
  );
}
